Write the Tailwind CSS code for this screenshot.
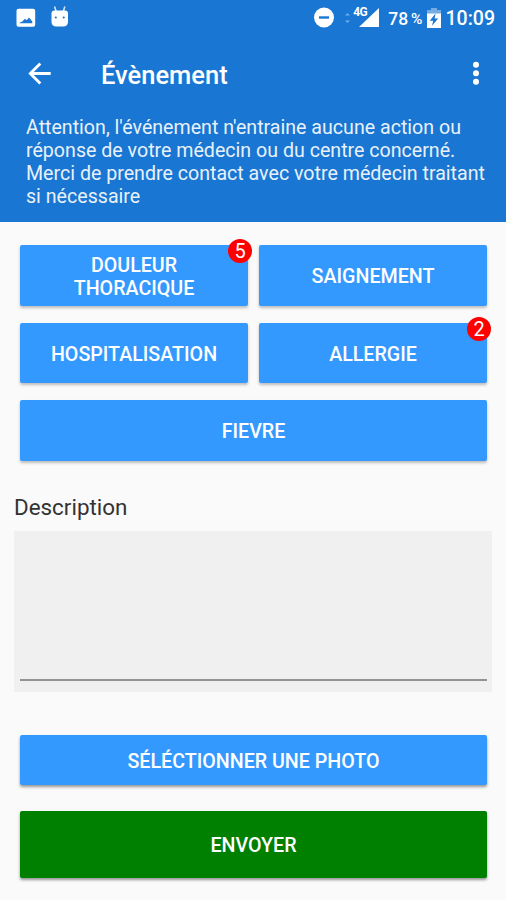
<!DOCTYPE html>
<html lang="fr">
<head>
  <meta charset="UTF-8" />
  <meta name="viewport" content="width=device-width, initial-scale=1.0" />
  <title>Évènement</title>
  <script src="https://cdn.jsdelivr.net/npm/@tailwindcss/browser@4"></script>
</head>
<body class="bg-[#fafafa] font-['Roboto',sans-serif]">
  <div class="flex h-screen flex-col overflow-hidden">
    <!-- Header -->
    <header class="h-[222px] shrink-0 bg-[#1976d2] text-white">
      <!-- Status bar -->
      <div class="flex h-9 items-center pl-4 pr-[11px]">
        <svg class="-mt-px h-5 w-5" viewBox="0 0 20 20">
          <path fill="#fff" fill-rule="evenodd" d="M2.500 .8h14.700a2 2 0 0 1 2 2v13.900a2 2 0 0 1-2 2H2.500a2 2 0 0 1-2-2V2.800a2 2 0 0 1 2-2zM3.500 15.200h12.800v-1.800l-3.300-3.800-2.200 2.700-1.800-1.600-3 3-2.500 1z" />
        </svg>
        <svg class="-mt-1 ml-[15px] h-6 w-[18px]" viewBox="0 0 18 24">
          <path stroke="#fff" stroke-opacity=".8" stroke-width="1.600" stroke-linecap="round" d="M3.700 3l1.300 4M13.700 3l-1.300 4" />
          <path fill="#fff" d="M.5 9.500q0-3 3-3h10.500q3 0 3 3v8q0 5-5 5H5.500q-5 0-5-5z" />
          <circle cx="4.800" cy="13.500" r="1.100" fill="#1976d2" />
          <circle cx="12.700" cy="13.500" r="1.100" fill="#1976d2" />
        </svg>
        <div class="ml-auto flex items-center">
          <svg class="-mt-px h-[21px] w-[21px]" viewBox="0 0 21 21">
            <circle cx="10" cy="10.500" r="10" fill="#fff" />
            <path fill="#1976d2" d="M5 9.300h10v2.400H5z" />
          </svg>
          <svg class="ml-[10px] h-3 w-[5px]" viewBox="0 0 5 12">
            <path fill="#fff" fill-opacity=".4" d="M0 3.500L2.500 1 5 3.500zM0 8.500h5L2.500 11z" />
          </svg>
          <div class="relative ml-[9px] h-5 w-5">
            <svg class="h-5 w-5" viewBox="0 0 20 20">
              <path fill="#fff" d="M0 19L20 0v19z" />
            </svg>
            <span class="absolute -left-[6px] -top-px bg-[#1976d2] pr-px text-[12px] font-bold leading-[11px] tracking-[-0.5px]">4G</span>
          </div>
          <span class="ml-[9px] pt-px text-[17.500px] font-medium leading-5">78</span>
          <span class="ml-[3px] pt-px text-[15.500px] font-medium leading-5">%</span>
          <svg class="ml-[4px] h-5 w-[14px]" viewBox="0 0 14 20">
            <path fill="#fff" fill-opacity=".4" d="M4 0h6v2h4v4H0V2h4z" />
            <path fill="#fff" d="M0 5.500h14V20H0z" />
            <path fill="#1976d2" d="M8.500 5.500L2.800 12.700h3.400l-1.200 5 6.200-7.200H7.600z" />
          </svg>
          <span class="ml-[5px] pt-px text-[19.500px] font-medium leading-6">10:09</span>
        </div>
      </div>
      <!-- App bar -->
      <div class="flex h-[76px] items-center pl-7 pr-[26px]">
        <svg class="-mt-0.5 h-[23px] w-[23px]" viewBox="0 0 23 23" fill="none" stroke="#fff" stroke-width="2.800">
          <path d="M12.300 1.500L2.300 11.500l10 10M2.300 11.500h20.400" />
        </svg>
        <h1 class="ml-[50px] pt-0.5 text-[25.500px] font-medium leading-8">Évènement</h1>
        <svg class="-mt-0.5 ml-auto h-6 w-2" viewBox="0 0 8 24" fill="#fff">
          <circle cx="4" cy="3.700" r="3" />
          <circle cx="4" cy="12.200" r="3" />
          <circle cx="4" cy="20.700" r="3" />
        </svg>
      </div>
      <p class="whitespace-nowrap pl-[26px] pt-1 text-[19.620px] leading-[23px] text-[#e8f1fa]">Attention, l'événement n'entraine aucune action ou<br />réponse de votre médecin ou du centre concerné.<br />Merci de prendre contact avec votre médecin traitant<br />si nécessaire</p>
    </header>

    <main class="flex flex-col px-[14px] pt-[23px]">
      <!-- Event types -->
      <div class="grid grid-cols-2 gap-x-[11px] gap-y-[17px] pl-1.5 pr-[5px] text-[19.650px] font-medium leading-[23px] text-white">
        <button class="relative h-[60.500px] rounded-[2px] bg-[#3399ff] pt-[3px] shadow-[0_2px_3px_rgba(0,0,0,0.25)]">
          DOULEUR<br />THORACIQUE
          <span class="absolute -right-1 -top-1.5 flex h-6 w-6 items-center justify-center rounded-full bg-[#ff0000] pt-px text-[20px] font-normal">5</span>
        </button>
        <button class="h-[60.500px] rounded-[2px] bg-[#3399ff] pt-[3px] shadow-[0_2px_3px_rgba(0,0,0,0.25)]">SAIGNEMENT</button>
        <button class="h-[60.500px] rounded-[2px] bg-[#3399ff] pt-[3px] shadow-[0_2px_3px_rgba(0,0,0,0.25)]">HOSPITALISATION</button>
        <button class="relative h-[60.500px] rounded-[2px] bg-[#3399ff] pt-[3px] shadow-[0_2px_3px_rgba(0,0,0,0.25)]">
          ALLERGIE
          <span class="absolute -right-1 -top-1.5 flex h-6 w-6 items-center justify-center rounded-full bg-[#ff0000] pt-px text-[20px] font-normal">2</span>
        </button>
        <button class="col-span-2 h-[60.500px] rounded-[2px] bg-[#3399ff] pt-[3px] shadow-[0_2px_3px_rgba(0,0,0,0.25)]">FIEVRE</button>
      </div>

      <!-- Description -->
      <label class="mt-[31px] text-[22.400px] leading-[30px] text-[#333333]">Description</label>
      <div class="mt-[9px] h-[161px] bg-[#f0f0f0] pb-[11px] pl-1.5 pr-[5px]">
        <div class="h-full border-b-2 border-[#929292]"></div>
      </div>

      <!-- Actions -->
      <div class="mt-[43px] flex flex-col gap-[26px] pl-1.5 pr-[5px] text-[19.650px] font-medium leading-[23px] text-white">
        <button class="h-[50px] rounded-[2px] bg-[#3399ff] pt-[3px] shadow-[0_2px_3px_rgba(0,0,0,0.4)]">SÉLÉCTIONNER UNE PHOTO</button>
        <button class="h-[67px] rounded-[2px] bg-[#008000] pt-[2px] shadow-[0_2px_3px_rgba(0,0,0,0.4)]">ENVOYER</button>
      </div>
    </main>
  </div>
</body>
</html>
